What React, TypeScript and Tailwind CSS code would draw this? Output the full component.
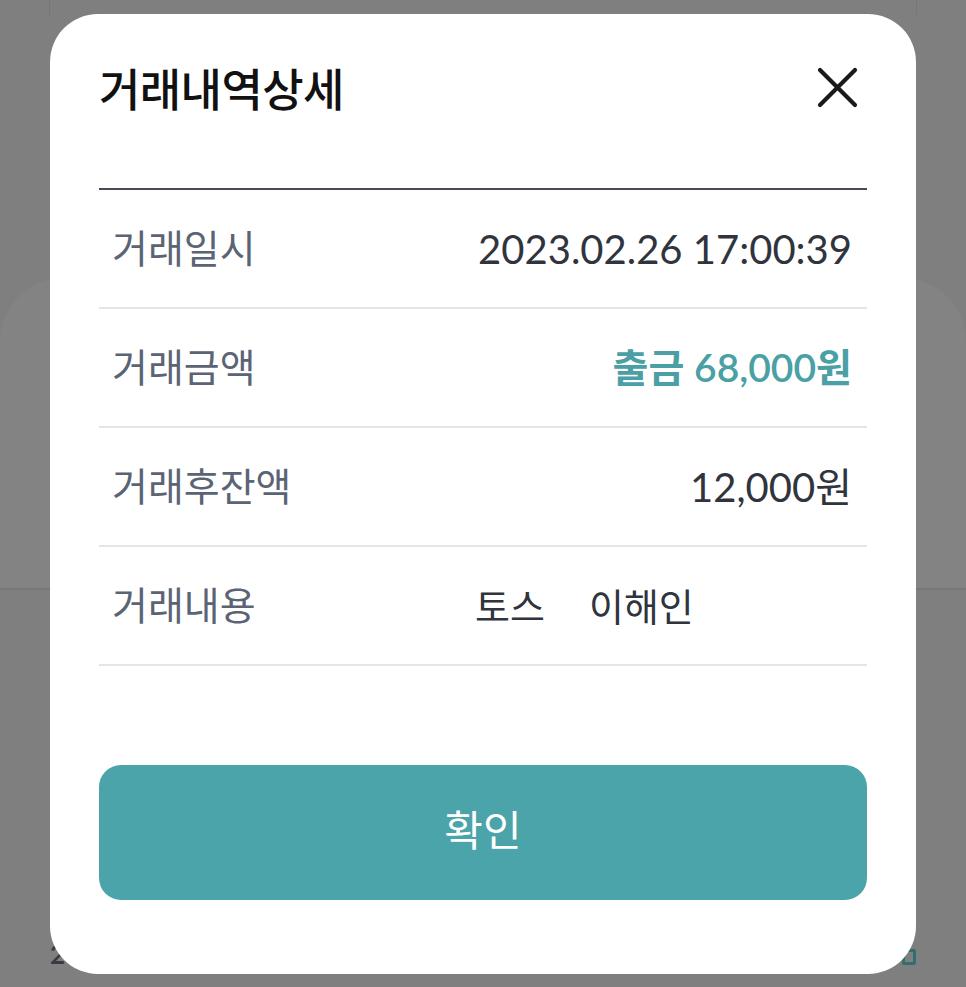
import { useState } from "react";

interface DetailRow {
  label: string;
  value: string;
  kind?: "amount" | "memo";
}

const rows: DetailRow[] = [
  { label: "거래일시", value: "2023.02.26 17:00:39" },
  { label: "거래금액", value: "출금 68,000원", kind: "amount" },
  { label: "거래후잔액", value: "12,000원" },
  { label: "거래내용", value: "토스|이해인", kind: "memo" },
];

const CloseIcon = () => (
  <svg width="42" height="42" viewBox="0 0 42 42" fill="none">
    <path d="M3 3L38 38M38 3L3 38" stroke="#1a1a1a" strokeWidth="4.2" strokeLinecap="round" />
  </svg>
);

const App = () => {
  const [open, setOpen] = useState(true);

  return (
    <div className="relative h-[987px] w-full overflow-hidden bg-[#7f7f7f] font-['Lato','Noto_Sans_CJK_KR',sans-serif]">
      {/* Page behind the dimmed overlay */}
      <div className="flex h-full flex-col">
        <div className="mx-[49px] h-[15px] border-x border-[#767676]" />
        <div className="h-[263px]" />
        <div className="h-[312px] rounded-t-[64px] border-b-2 border-[#777777] bg-[#838383]" />
        <div className="flex flex-1 items-end justify-between px-[50px] pb-[20px]">
          <span className="text-[26px] font-bold leading-none text-[#3a3b42]">2</span>
          <span className="mb-[2px] h-[16px] w-[14px] rounded-[2px] border-[3px] border-[#2f6f70]" />
        </div>
      </div>

      {/* Modal */}
      {open && (
        <div className="absolute inset-0 flex justify-center pt-[14px]">
          <div className="flex h-[960px] w-[866px] flex-col rounded-[48px] bg-white">
            <div className="flex h-[174px] items-start justify-between pl-[49px] pr-[57px] pt-[48px]">
              <h1 className="text-[45px] font-medium leading-[56px] tracking-[-0.6px] text-[#111111]">거래내역상세</h1>
              <button onClick={() => setOpen(false)} className="mt-[5px]">
                <CloseIcon />
              </button>
            </div>

            <div className="mx-[49px] border-t-2 border-[#4a4c55]">
              {rows.map((r, i) => (
                <div
                  key={i}
                  className="flex h-[119px] items-center justify-between border-b-2 border-[#e5e5e5] pl-[13px] pr-[15px]"
                >
                  <span className="text-[39px] leading-none text-[#5b6474]">{r.label}</span>
                  {r.kind === "amount" ? (
                    <span className="text-[39px] font-semibold leading-none text-[#4aa0a5]">{r.value}</span>
                  ) : r.kind === "memo" ? (
                    <span className="flex w-[377px] items-center gap-[44px] text-[38px] leading-none text-[#30343d]">
                      {r.value.split("|").map((w) => (
                        <span key={w}>{w}</span>
                      ))}
                    </span>
                  ) : (
                    <span className="text-[40px] leading-none text-[#30343d]">{r.value}</span>
                  )}
                </div>
              ))}
            </div>

            <button className="mx-[49px] mt-[99px] flex h-[135px] items-center justify-center rounded-[22px] bg-[#4ba4a9] pb-[4px] text-[42px] text-white">
              확인
            </button>
          </div>
        </div>
      )}
    </div>
  );
};

export default App;
